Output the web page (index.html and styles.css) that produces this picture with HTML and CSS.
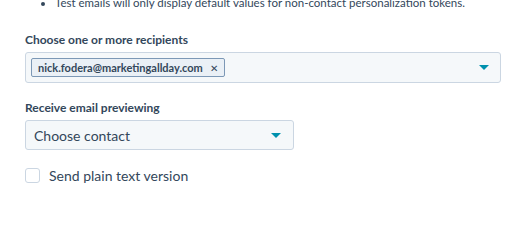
FILE: index.html
```html
<!DOCTYPE html>
<html lang="en">
  <head>
    <meta charset="UTF-8" />
    <meta name="viewport" content="width=device-width, initial-scale=1.0" />
    <title>Send test email</title>
    <link rel="stylesheet" href="styles.css">
  </head>
  <body>
    <div id="container">
      <ul class="notes">
        <li>Test emails will only display default values for non-contact personalization tokens.</li>
      </ul>

      <div class="field first">
        <label class="label">Choose one or more recipients</label>
        <div class="select multi">
          <span class="tag">nick.fodera@marketingallday.com <span class="remove">&#x2715;</span></span>
          <span class="caret"></span>
        </div>
      </div>

      <div class="field">
        <label class="label">Receive email previewing</label>
        <div class="select single">
          <span class="placeholder">Choose contact</span>
          <span class="caret"></span>
        </div>
      </div>

      <label class="check">
        <span class="box"></span>
        <span>Send plain text version</span>
      </label>
    </div>
  </body>
</html>
```

FILE: styles.css
```css
body {
  margin: 0;
  font-family: Lato, sans-serif;
  color: #33475b;
  background-color: white;
}
#container {
  padding: 0 31px 0 25px;
}
.notes {
  margin: -6px 0 0 0;
  padding-left: 30px;
  font-size: 11.5px;
  line-height: 18px;
  white-space: nowrap;
}
.field {
  margin-top: 16px;
}
.field.first {
  margin-top: 19px;
}
.label {
  display: block;
  font-size: 12px;
  font-weight: 700;
  line-height: 18px;
  margin-bottom: 3px;
}
.select {
  display: flex;
  align-items: center;
  background-color: #f5f8fa;
  border: 1px solid #cbd6e2;
  border-radius: 3px;
  box-sizing: border-box;
}
.multi {
  height: 31px;
  padding: 0 11px 0 5px;
}
.single {
  width: 269px;
  height: 30px;
  padding: 0 12px 0 8px;
}
.tag {
  display: flex;
  align-items: center;
  gap: 7px;
  height: 19px;
  box-sizing: border-box;
  padding: 0 6px;
  background-color: #eaf0f6;
  border: 1px solid #7c98b6;
  border-radius: 2px;
  font-size: 11px;
  font-weight: 700;
}
.remove {
  font-size: 10px;
  font-weight: 400;
}
.placeholder {
  font-size: 14px;
}
.caret {
  margin-left: auto;
  width: 0;
  height: 0;
  border-left: 5px solid transparent;
  border-right: 5px solid transparent;
  border-top: 5px solid #0091ae;
}
.check {
  display: flex;
  align-items: center;
  gap: 9px;
  margin-top: 17px;
  font-size: 14px;
}
.box {
  width: 15px;
  height: 15px;
  box-sizing: border-box;
  border: 1px solid #cbd6e2;
  border-radius: 3px;
  background-color: white;
}
```
